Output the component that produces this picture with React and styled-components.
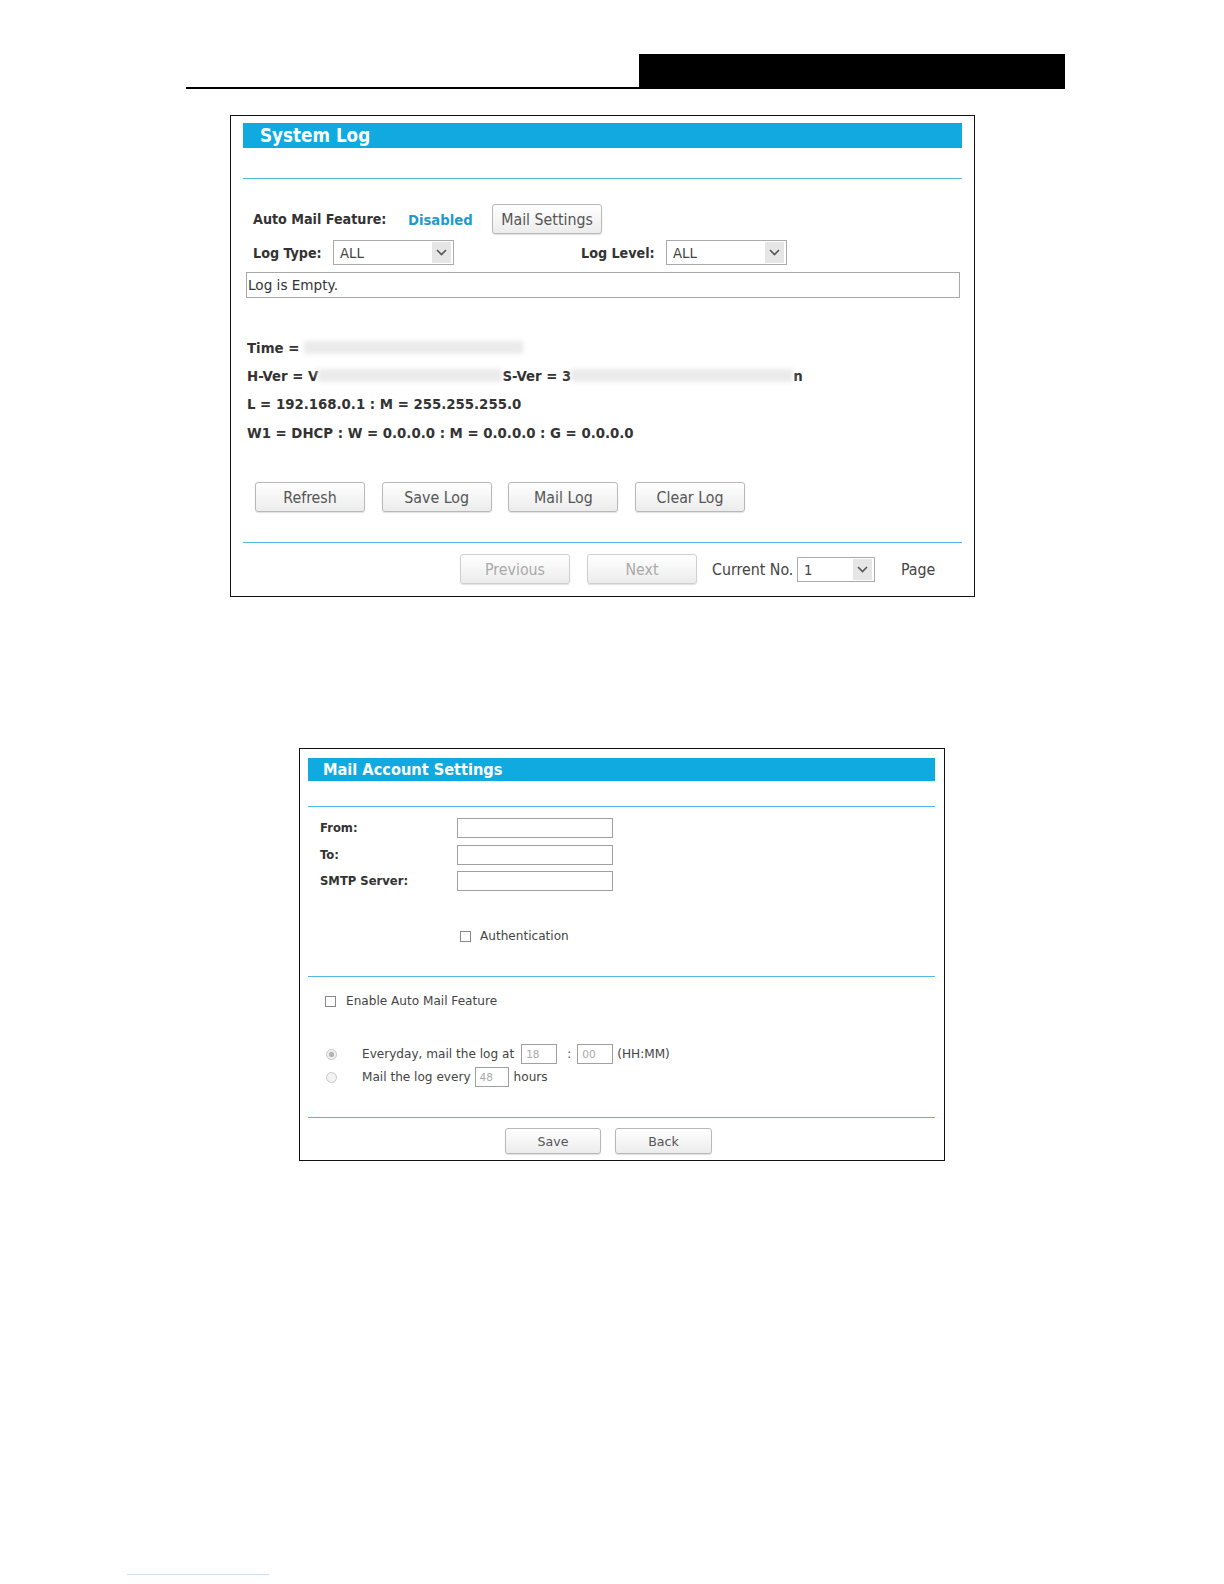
import React from 'react';
import styled, { createGlobalStyle } from 'styled-components';

const Global = createGlobalStyle`
  html, body { margin: 0; padding: 0; background: #fff; overflow: hidden; }
  body { font-family: "DejaVu Sans", Verdana, sans-serif; color: #333; }
`;

const condensed = '"DejaVu Sans Condensed", "DejaVu Sans", sans-serif';

const Page = styled.div`
  width: 1224px;
  height: 1584px;
  position: relative;
  overflow: hidden;
  padding-top: 54px;
  box-sizing: border-box;
`;

const Header = styled.div`
  display: flex;
  margin-left: 186px;
  width: 879px;
  border-bottom: 2px solid #000;
`;

const HeaderGap = styled.div`
  flex: 1;
`;

const HeaderBlock = styled.div`
  width: 426px;
  height: 33px;
  background: #000;
`;

const Panel = styled.div`
  margin-left: ${p => p.left}px;
  margin-top: ${p => p.top}px;
  width: ${p => p.width}px;
  border: 1px solid #111;
  box-sizing: border-box;
  padding: ${p => p.pad};
`;

const TitleBar = styled.div`
  background: #10a9e0;
  height: ${p => p.h}px;
  color: #fff;
  font-weight: bold;
  font-size: ${p => p.fs}px;
  line-height: ${p => p.h}px;
  padding-left: ${p => p.indent}px;
  font-family: ${condensed};
`;

const Rule = styled.div`
  height: 1px;
  background: #52b8e0;
  margin-top: ${p => p.top}px;
`;

const Row = styled.div`
  display: flex;
  align-items: center;
  height: ${p => p.h || 30}px;
  margin-top: ${p => p.top || 0}px;
  padding-left: ${p => p.indent || 0}px;
`;

const Label = styled.span`
  font-weight: bold;
  font-size: 14.2px;
  color: #333;
  font-family: ${condensed};
  width: ${p => (p.w ? p.w + 'px' : 'auto')};
  margin-left: ${p => p.ml || 0}px;
  flex-shrink: 0;
`;

const Status = styled.span`
  font-weight: bold;
  font-size: 14.7px;
  color: #1e9bc9;
  font-family: ${condensed};
  width: ${p => p.w}px;
  flex-shrink: 0;
`;

const Button = styled.div`
  width: ${p => p.w}px;
  height: ${p => p.h}px;
  box-sizing: border-box;
  border: 1px solid ${p => (p.disabled ? '#cfcfcf' : '#b8b8b8')};
  border-radius: 3px;
  background: linear-gradient(#ffffff, #ececec);
  box-shadow: 0 1px 1px rgba(0, 0, 0, 0.12);
  display: flex;
  align-items: center;
  justify-content: center;
  font-size: ${p => p.fs || 15.8}px;
  color: ${p => (p.disabled ? '#aaa' : '#555')};
  margin-left: ${p => p.ml || 0}px;
  flex-shrink: 0;
  font-family: ${p => (p.wide ? '"DejaVu Sans", sans-serif' : condensed)};
`;

const Select = styled.div`
  width: ${p => p.w}px;
  height: 25px;
  box-sizing: border-box;
  border: 1px solid #aaa;
  display: flex;
  align-items: center;
  background: #fff;
  margin-left: ${p => p.ml || 0}px;
  flex-shrink: 0;
`;

const SelectValue = styled.span`
  flex: 1;
  padding-left: 6px;
  font-size: 14.7px;
  color: #444;
  font-family: ${condensed};
`;

const SelectArrow = styled.span`
  width: 19px;
  height: 21px;
  margin-right: 2px;
  background: #e6e6e6;
  display: flex;
  align-items: center;
  justify-content: center;
`;

const LogBox = styled.div`
  margin: 7px 2px 0 3px;
  height: 26px;
  box-sizing: border-box;
  border: 1px solid #a8a8a8;
  font-size: 13.6px;
  color: #333;
  display: flex;
  align-items: center;
  padding-left: 1px;
  font-family: "DejaVu Sans", sans-serif;
`;

const Info = styled.div`
  margin-top: 35px;
  padding-left: 4px;
`;

const InfoLine = styled.div`
  display: flex;
  align-items: center;
  height: 28.3px;
  font-weight: bold;
  font-size: 14.8px;
  color: #333;
  white-space: pre;
  font-family: ${condensed};
`;

const Blur = styled.span`
  display: inline-block;
  width: ${p => p.w}px;
  height: 13px;
  background: #ebebeb;
  filter: blur(2px);
  flex-shrink: 0;
`;

const Pager = styled.div`
  display: flex;
  align-items: center;
  height: 30px;
  margin-top: 11px;
  padding-left: 217px;
`;

const PlainText = styled.span`
  font-size: 15.8px;
  color: #444;
  width: ${p => (p.w ? p.w + 'px' : 'auto')};
  margin-left: ${p => p.ml || 0}px;
  flex-shrink: 0;
  font-family: ${condensed};
`;

const FieldRow = styled.div`
  display: flex;
  align-items: center;
  height: 20px;
  margin-top: ${p => p.top}px;
  padding-left: 12px;
`;

const SmallLabel = styled.span`
  width: 137px;
  font-weight: bold;
  font-size: 11.6px;
  color: #333;
  flex-shrink: 0;
  font-family: "DejaVu Sans", sans-serif;
`;

const TextInput = styled.div`
  width: ${p => p.w}px;
  height: 20px;
  box-sizing: border-box;
  border: 1px solid #a0a0a0;
  font-size: 10.5px;
  color: #aaa;
  padding-left: 4px;
  display: flex;
  align-items: center;
  margin-left: ${p => p.ml || 0}px;
  flex-shrink: 0;
  font-family: "DejaVu Sans", sans-serif;
`;

const Check = styled.span`
  width: 11px;
  height: 11px;
  box-sizing: border-box;
  border: 1px solid #888;
  background: #fff;
  flex-shrink: 0;
`;

const Radio = styled.span`
  width: 11px;
  height: 11px;
  box-sizing: border-box;
  border-radius: 50%;
  border: 1px solid #c8c8c8;
  background: radial-gradient(circle, ${p => (p.on ? '#b5b5b5 0 2.5px, #f0f0f0 3px' : '#f2f2f2 0')});
  flex-shrink: 0;
`;

const SmallText = styled.span`
  font-size: 12.1px;
  color: #444;
  margin-left: ${p => p.ml || 0}px;
  flex-shrink: 0;
  font-family: "DejaVu Sans", sans-serif;
`;

const Buttons = styled.div`
  display: flex;
  margin-top: ${p => p.top}px;
  padding-left: ${p => p.indent}px;
  gap: ${p => p.gap}px;
`;

const FooterRule = styled.div`
  position: absolute;
  left: 127px;
  top: 1574px;
  width: 142px;
  height: 1px;
  background: #c9dff0;
`;

function Chevron() {
  return (
    <svg width="11" height="7" viewBox="0 0 11 7">
      <path d="M1 1 L5.5 5.5 L10 1" fill="none" stroke="#555" strokeWidth="1.6" />
    </svg>
  );
}

function Dropdown({ w, ml, value }) {
  return (
    <Select w={w} ml={ml}>
      <SelectValue>{value}</SelectValue>
      <SelectArrow><Chevron /></SelectArrow>
    </Select>
  );
}

function SystemLog() {
  return (
    <Panel left={230} top={26} width={745} pad="7px 12px 12px 12px">
      <TitleBar h={25} fs={18.7} indent={17}>System Log</TitleBar>
      <Rule top={30} />
      <Row top={25} indent={10}>
        <Label w={155}>Auto Mail Feature:</Label>
        <Status w={84}>Disabled</Status>
        <Button w={110} h={30}>Mail Settings</Button>
      </Row>
      <Row top={6} h={25} indent={10}>
        <Label w={80}>Log Type:</Label>
        <Dropdown w={121} value="ALL" />
        <Label w={85} ml={127}>Log Level:</Label>
        <Dropdown w={121} value="ALL" />
      </Row>
      <LogBox>Log is Empty.</LogBox>
      <Info>
        <InfoLine>Time = <Blur w={219} /></InfoLine>
        <InfoLine>H-Ver = V<Blur w={184} />S-Ver = 3<Blur w={222} />n</InfoLine>
        <InfoLine>L = 192.168.0.1 : M = 255.255.255.0</InfoLine>
        <InfoLine>W1 = DHCP : W = 0.0.0.0 : M = 0.0.0.0 : G = 0.0.0.0</InfoLine>
      </Info>
      <Buttons top={36} indent={12} gap={16.7}>
        <Button w={110} h={30}>Refresh</Button>
        <Button w={110} h={30}>Save Log</Button>
        <Button w={110} h={30}>Mail Log</Button>
        <Button w={110} h={30}>Clear Log</Button>
      </Buttons>
      <Rule top={30} />
      <Pager>
        <Button w={110} h={30} disabled>Previous</Button>
        <Button w={110} h={30} ml={17} disabled>Next</Button>
        <PlainText w={85} ml={15}>Current No.</PlainText>
        <Dropdown w={78} value="1" />
        <PlainText ml={26}>Page</PlainText>
      </Pager>
    </Panel>
  );
}

function MailSettings() {
  return (
    <Panel left={299} top={151} width={646} pad="9px 9px 6px 8px">
      <TitleBar h={23} fs={16.2} indent={15}>Mail Account Settings</TitleBar>
      <Rule top={25} />
      <FieldRow top={11}>
        <SmallLabel>From:</SmallLabel>
        <TextInput w={156} />
      </FieldRow>
      <FieldRow top={7}>
        <SmallLabel>To:</SmallLabel>
        <TextInput w={156} />
      </FieldRow>
      <FieldRow top={6}>
        <SmallLabel>SMTP Server:</SmallLabel>
        <TextInput w={156} />
      </FieldRow>
      <Row h={14} top={38} indent={152}>
        <Check />
        <SmallText ml={9}>Authentication</SmallText>
      </Row>
      <Rule top={33} />
      <Row h={14} top={17} indent={17}>
        <Check />
        <SmallText ml={10}>Enable Auto Mail Feature</SmallText>
      </Row>
      <Row h={20} top={36} indent={18}>
        <Radio on />
        <SmallText ml={25}>Everyday, mail the log at</SmallText>
        <TextInput w={36} ml={7}>18</TextInput>
        <SmallText ml={10}>:</SmallText>
        <TextInput w={36} ml={6}>00</TextInput>
        <SmallText ml={4}>(HH:MM)</SmallText>
      </Row>
      <Row h={20} top={3} indent={18}>
        <Radio />
        <SmallText ml={25}>Mail the log every</SmallText>
        <TextInput w={34} ml={4}>48</TextInput>
        <SmallText ml={5}>hours</SmallText>
      </Row>
      <Rule top={30} />
      <Buttons top={10} indent={197} gap={14}>
        <Button w={96} h={26} fs={12.6} wide>Save</Button>
        <Button w={97} h={26} fs={12.6} wide>Back</Button>
      </Buttons>
    </Panel>
  );
}

export default function App() {
  return (
    <Page>
      <Global />
      <Header>
        <HeaderGap />
        <HeaderBlock />
      </Header>
      <SystemLog />
      <MailSettings />
      <FooterRule />
    </Page>
  );
}
